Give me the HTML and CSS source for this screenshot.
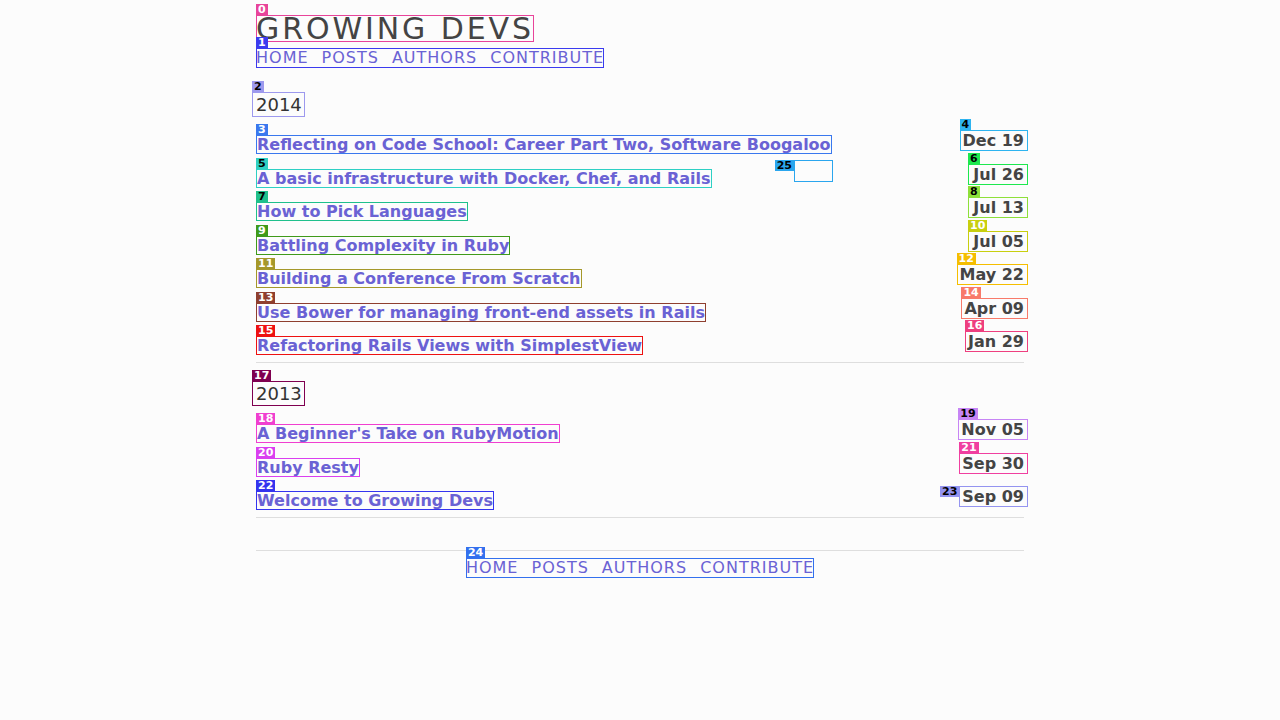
FILE: index.html
```html
<!DOCTYPE html>
<html lang="en">
<head>
<meta charset="utf-8">
<title>Growing Devs</title>
<link rel="stylesheet" href="styles.css">
</head>
<body>
<div class="page">
  <header class="site-header">
    <h1 class="site-title mk m0" data-m="0">GROWING DEVS</h1>
    <nav class="nav mk m1" data-m="1"><a href="#">HOME</a><a href="#">POSTS</a><a href="#">AUTHORS</a><a href="#">CONTRIBUTE</a></nav>
  </header>

  <section class="year">
    <h2 class="year-title mk m2" data-m="2">2014</h2>
    <ul class="posts">
      <li class="post"><a class="post-title mk m3" data-m="3" href="#">Reflecting on Code School: Career Part Two, Software Boogaloo</a><span class="post-date mk m4" data-m="4">Dec 19</span></li>
      <li class="post"><a class="post-title mk m5" data-m="5" href="#">A basic infrastructure with Docker, Chef, and Rails</a><span class="ghost mk mk-left m25" data-m="25"></span><span class="post-date mk m6" data-m="6">Jul 26</span></li>
      <li class="post"><a class="post-title mk m7" data-m="7" href="#">How to Pick Languages</a><span class="post-date mk m8" data-m="8">Jul 13</span></li>
      <li class="post"><a class="post-title mk m9" data-m="9" href="#">Battling Complexity in Ruby</a><span class="post-date mk m10" data-m="10">Jul 05</span></li>
      <li class="post"><a class="post-title mk m11" data-m="11" href="#">Building a Conference From Scratch</a><span class="post-date mk m12" data-m="12">May 22</span></li>
      <li class="post"><a class="post-title mk m13" data-m="13" href="#">Use Bower for managing front-end assets in Rails</a><span class="post-date mk m14" data-m="14">Apr 09</span></li>
      <li class="post"><a class="post-title mk m15" data-m="15" href="#">Refactoring Rails Views with SimplestView</a><span class="post-date mk m16" data-m="16">Jan 29</span></li>
    </ul>
  </section>
  <hr class="rule">

  <section class="year">
    <h2 class="year-title mk m17" data-m="17">2013</h2>
    <ul class="posts">
      <li class="post"><a class="post-title mk m18" data-m="18" href="#">A Beginner's Take on RubyMotion</a><span class="post-date mk m19" data-m="19">Nov 05</span></li>
      <li class="post"><a class="post-title mk m20" data-m="20" href="#">Ruby Resty</a><span class="post-date mk m21" data-m="21">Sep 30</span></li>
      <li class="post"><a class="post-title mk m22" data-m="22" href="#">Welcome to Growing Devs</a><span class="post-date mk mk-left m23" data-m="23">Sep 09</span></li>
    </ul>
  </section>
  <hr class="rule">

  <footer class="site-footer">
    <nav class="nav mk m24" data-m="24"><a href="#">HOME</a><a href="#">POSTS</a><a href="#">AUTHORS</a><a href="#">CONTRIBUTE</a></nav>
  </footer>
</div>
</body>
</html>
```

FILE: styles.css
```css
* { box-sizing: border-box; }

body {
  margin: 0;
  background: #fcfcfc;
  font-family: "DejaVu Sans", "Liberation Sans", sans-serif;
  color: #444;
}

.page {
  width: 768px;
  margin: 0 auto;
  padding-top: 15px;
}

a { color: #6a62d4; text-decoration: none; }

.site-header {
  display: flex;
  flex-direction: column;
  align-items: flex-start;
}

.site-title {
  margin: 0;
  font-size: 30px;
  font-weight: normal;
  line-height: 27px;
  letter-spacing: 2.9px;
  color: #444;
}

.nav {
  display: inline-flex;
  gap: 13px;
  margin-top: 6px;
  font-size: 16px;
  line-height: 20px;
  letter-spacing: 1px;
}

.year {
  display: flex;
  flex-direction: column;
  align-items: flex-start;
}

.site-header + .year { margin-top: 24px; }

.year-title {
  margin: 0 0 13px -4px;
  padding: 0 3px 0 4px;
  font-size: 18px;
  font-weight: normal;
  line-height: 25px;
  color: #333;
}

.posts {
  list-style: none;
  margin: 0;
  padding: 0;
  width: 100%;
  display: flex;
  flex-direction: column;
  gap: 9.5px;
}

.post {
  position: relative;
  display: flex;
  justify-content: space-between;
  align-items: flex-start;
  height: 24px;
}

.post-title {
  margin-top: 5px;
  padding: 0 1px;
  font-size: 16px;
  font-weight: bold;
  line-height: 19px;
}

.post-date {
  min-width: 60px;
  margin-right: -4px;
  padding: 0 4px 0 3px;
  text-align: right;
  font-size: 16px;
  font-weight: bold;
  line-height: 21px;
  color: #444;
}

.rule {
  width: 100%;
  margin: 7px 0 18px;
  border: 0;
  border-top: 1px solid #dedede;
}

.site-footer {
  display: flex;
  flex-direction: column;
  align-items: center;
  margin-top: 32px;
  border-top: 1px solid #dedede;
}

.site-footer .nav { margin-top: 7px; }

/* annotation marks */
.mk {
  position: relative;
  outline: 1px solid var(--c);
  outline-offset: -1px;
}

.mk.ghost {
  position: absolute;
  left: 538px;
  top: -4px;
  width: 39px;
  height: 22px;
}

.mk::before {
  content: attr(data-m);
  position: absolute;
  left: 0;
  bottom: 100%;
  padding: 0 2px;
  background: var(--c);
  color: var(--t, #fff);
  font: bold 11px/11px "DejaVu Sans", sans-serif;
  letter-spacing: 0;
}

.mk-left::before {
  left: auto;
  right: 100%;
  top: 0;
  bottom: auto;
}

.m0 { --c: #e8449a; }
.m1 { --c: #3b3bef; }
.m2 { --c: #9d99ee; --t: #000; }
.m3 { --c: #3a78ee; }
.m4 { --c: #2eb4f0; --t: #000; }
.m5 { --c: #2ed0c4; --t: #000; }
.m6 { --c: #1de84f; --t: #000; }
.m7 { --c: #1fc08c; --t: #000; }
.m8 { --c: #8ee03a; --t: #000; }
.m9 { --c: #3f9a1a; }
.m10 { --c: #c8cf0f; }
.m11 { --c: #a5982a; }
.m12 { --c: #f5be00; }
.m13 { --c: #8f3f2f; }
.m14 { --c: #f87a6a; }
.m15 { --c: #ee1111; }
.m16 { --c: #ee3f7f; }
.m17 { --c: #7f0050; }
.m18 { --c: #f03fd0; }
.m19 { --c: #c785f5; --t: #000; }
.m20 { --c: #da3ff0; }
.m21 { --c: #f03fa0; }
.m22 { --c: #3434ef; }
.m23 { --c: #9494f0; --t: #000; }
.m24 { --c: #3370ee; }
.m25 { --c: #2aa6ee; --t: #000; }
```
